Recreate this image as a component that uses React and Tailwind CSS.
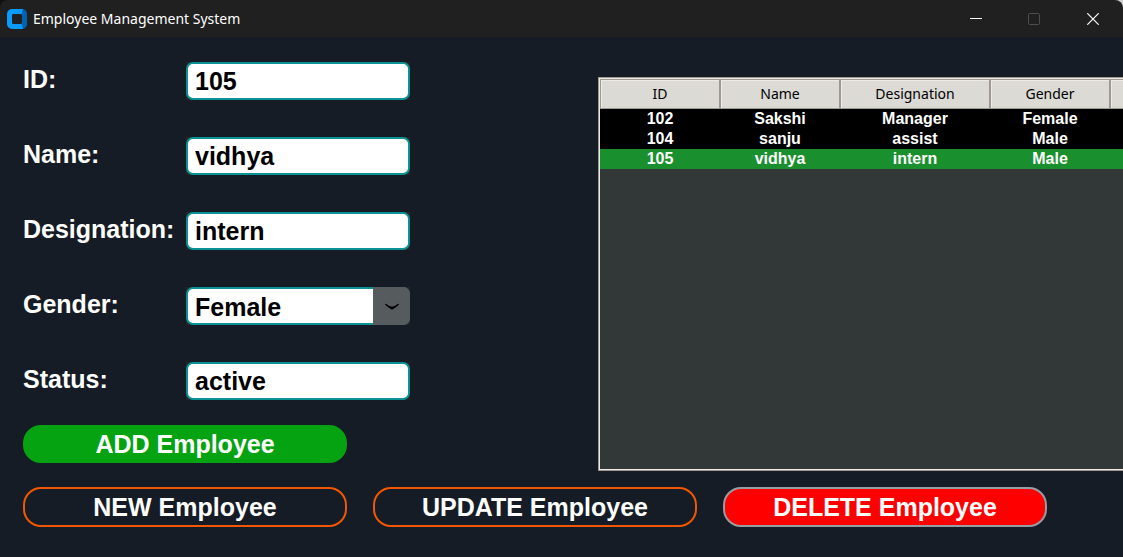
import { useState } from "react";

const FIELDS = [
  { key: "id", label: "ID:" },
  { key: "name", label: "Name:" },
  { key: "designation", label: "Designation:" },
  { key: "gender", label: "Gender:", options: ["Female", "Male"] },
  { key: "status", label: "Status:" },
];

const EMPLOYEES = [
  { id: "102", name: "Sakshi", designation: "Manager", gender: "Female" },
  { id: "104", name: "sanju", designation: "assist", gender: "Male" },
  { id: "105", name: "vidhya", designation: "intern", gender: "Male" },
];

const COLUMNS = ["ID", "Name", "Designation", "Gender", ""];

const boxClass =
  "h-[38px] w-full rounded-[7px] border-2 border-[#0c9295] bg-white pr-2 pl-[7px] text-[25px] font-bold text-black outline-none";

const pillClass =
  "w-[324px] shrink-0 rounded-[18px] text-[25px] leading-[34px] font-bold text-white";

function TitleBar() {
  return (
    <div className="bg-linear-to-r from-[#101010] to-[#d0d0d0]">
      <header className="flex h-[37px] items-center rounded-t-lg bg-[#202020] pl-[7px] text-white">
        <svg className="size-5" viewBox="0 0 20 20" aria-hidden="true">
          <path d="M15 0a5 5 0 0 1 5 5v10a5 5 0 0 1-5 5l-1-3V3z" fill="#0062b3" />
          <path
            d="M5 0h11l-1.500 5H7a2 2 0 0 0-2 2v6a2 2 0 0 0 2 2h7.500L16 20H5a5 5 0 0 1-5-5V5a5 5 0 0 1 5-5z"
            fill="#0a9bff"
          />
          <rect x="5" y="5" width="10" height="10" rx="2" fill="#202020" />
        </svg>
        <h1 className="ml-[6px] flex-1 font-['Noto_Sans',sans-serif] text-[14px] leading-5">
          Employee Management System
        </h1>
        <button type="button" aria-label="Minimize" className="flex h-9 w-[58px] items-center justify-center">
          <svg className="size-3" viewBox="0 0 12 12" aria-hidden="true">
            <path d="M0 5.500h12" stroke="#fff" />
          </svg>
        </button>
        <button
          type="button"
          disabled
          aria-label="Maximize"
          className="flex h-9 w-[58px] items-center justify-center"
        >
          <svg className="size-3" viewBox="0 0 12 12" fill="none" aria-hidden="true">
            <rect x=".5" y=".5" width="11" height="11" rx="1" stroke="#4d4d4d" />
          </svg>
        </button>
        <button type="button" aria-label="Close" className="flex h-9 w-[60px] items-center justify-center">
          <svg className="size-3" viewBox="0 0 12 12" aria-hidden="true">
            <path d="M.3.3l11.400 11.400M11.700.3L.3 11.700" stroke="#fff" strokeWidth="1.2" />
          </svg>
        </button>
      </header>
    </div>
  );
}

function Field({ field, value, onChange }) {
  return (
    <div className="flex items-start">
      <label htmlFor={field.key} className="w-[163px] text-[25px] leading-[34px] font-bold text-white">
        {field.label}
      </label>
      <div className="relative w-56 bg-[#242424]">
        {field.options ? (
          <>
            <select
              id={field.key}
              value={value}
              onChange={onChange}
              className={`${boxClass} block appearance-none pb-[2px]`}
            >
              {field.options.map((o) => (
                <option key={o}>{o}</option>
              ))}
            </select>
            <span className="pointer-events-none absolute inset-y-0 right-0 flex w-[37px] items-center justify-center rounded-r-[7px] bg-[#565b5e]">
              <svg className="h-2 w-[14px]" viewBox="0 0 14 8" fill="none" aria-hidden="true">
                <path
                  d="M1 2.500L3.500 4.500L7 5.500L10.500 4.500L13 2.500M3.500 4.500L7 6.800L10.500 4.500"
                  stroke="#000"
                  strokeWidth="1.600"
                  strokeLinecap="round"
                />
              </svg>
            </span>
          </>
        ) : (
          <input id={field.key} type="text" value={value} onChange={onChange} className={`${boxClass} block`} />
        )}
      </div>
    </div>
  );
}

function EmployeeTable({ selected, onSelect }) {
  return (
    <div className="mt-[15px] ml-[188px] min-w-0 flex-1 overflow-hidden border border-r-0 border-[#9e9a91]">
      <div className="h-full overflow-hidden border border-r-0 border-[#eeebe7] bg-[#313837]">
        <table className="w-[660px] table-fixed border-separate border-spacing-0">
          <colgroup>
            <col className="w-[120px]" />
            <col className="w-[120px]" />
            <col className="w-[150px]" />
            <col className="w-[120px]" />
            <col className="w-[150px]" />
          </colgroup>
          <thead>
            <tr>
              {COLUMNS.map((c) => (
                <th
                  key={c}
                  scope="col"
                  className="h-[30px] border border-[#9e9a91] bg-[#dcdad5] p-0 font-['Noto_Sans',sans-serif] text-[14px] leading-5 font-normal text-black shadow-[inset_1px_1px_#eeebe7]"
                >
                  {c}
                </th>
              ))}
            </tr>
          </thead>
          <tbody className="text-center text-[16px] leading-5 font-bold text-white">
            {EMPLOYEES.map((e) => (
              <tr
                key={e.id}
                onClick={() => onSelect(e.id)}
                className={e.id === selected ? "bg-[#1a8f2d]" : "bg-black"}
              >
                <td className="p-0">{e.id}</td>
                <td className="p-0">{e.name}</td>
                <td className="p-0">{e.designation}</td>
                <td className="p-0">{e.gender}</td>
                <td className="p-0" />
              </tr>
            ))}
          </tbody>
        </table>
      </div>
    </div>
  );
}

export default function App() {
  const [selected, setSelected] = useState("105");
  const [form, setForm] = useState({
    id: "105",
    name: "vidhya",
    designation: "intern",
    gender: "Female",
    status: "active",
  });

  return (
    <div className="flex min-h-screen flex-col overflow-hidden bg-[#161c25] font-['Liberation_Sans',Arial,sans-serif]">
      <TitleBar />
      <main className="flex-1 pt-[25px] pb-[30px] pl-[23px]">
        <div className="flex">
          <form className="shrink-0 pb-2" onSubmit={(e) => e.preventDefault()}>
            <div className="flex flex-col gap-[37px]">
              {FIELDS.map((f) => (
                <Field
                  key={f.key}
                  field={f}
                  value={form[f.key]}
                  onChange={(e) => setForm({ ...form, [f.key]: e.target.value })}
                />
              ))}
            </div>
            <button type="submit" className={`${pillClass} mt-[25px] block border-2 border-[#05a312] bg-[#05a312]`}>
              ADD Employee
            </button>
          </form>
          <EmployeeTable selected={selected} onSelect={setSelected} />
        </div>
        <div className="mt-4 flex gap-[26px]">
          <button type="button" className={`${pillClass} h-10 border-2 border-[#f15704]`}>
            NEW Employee
          </button>
          <button type="button" className={`${pillClass} h-10 border-2 border-[#f15704]`}>
            UPDATE Employee
          </button>
          <button type="button" className={`${pillClass} h-10 border-2 border-[#979da2] bg-[#ff0000]`}>
            DELETE Employee
          </button>
        </div>
      </main>
    </div>
  );
}
